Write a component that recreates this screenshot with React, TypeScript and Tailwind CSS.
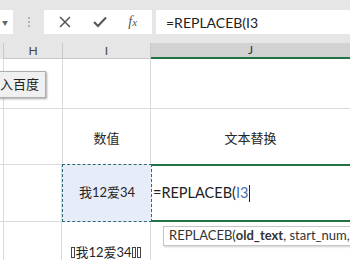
import React from "react";

const cjk = "font-['Lato','Noto_Sans_CJK_SC',sans-serif]";

function Tofu() {
  return <span className="inline-block w-[4px] h-[11px] border border-[#444] align-[-1px] mx-[0.5px]" />;
}

export default function App() {
  return (
    <div className={`relative w-[350px] h-[260px] overflow-hidden bg-white text-[#262626] ${cjk}`}>
      {/* Formula bar */}
      <div className="h-[44px] bg-[#e6e6e6] flex items-start pt-[10px]">
        <div className="w-[13px] h-[24px] bg-white flex items-center pl-[2px]">
          <span className="text-[6px] text-[#666]">▼</span>
        </div>
        <div className="w-[31px] h-[24px] flex items-center justify-center">
          <div className="flex flex-col gap-[2px]">
            <span className="w-[2px] h-[2px] bg-[#b4b4b4]" />
            <span className="w-[2px] h-[2px] bg-[#b4b4b4]" />
            <span className="w-[2px] h-[2px] bg-[#b4b4b4]" />
          </div>
        </div>
        <div className="w-[108px] h-[24px] bg-white flex items-center justify-around px-[4px] text-[#555]">
          <svg width="12" height="12" viewBox="0 0 12 12">
            <path d="M1 1 L11 11 M11 1 L1 11" stroke="#555" strokeWidth="1.5" fill="none" />
          </svg>
          <svg width="14" height="12" viewBox="0 0 14 12">
            <path d="M1 6 L5 10 L13 1.5" stroke="#555" strokeWidth="2" fill="none" />
          </svg>
          <span className="font-['Liberation_Serif',serif] italic text-[14px] leading-none">
            f<span className="text-[11px]">x</span>
          </span>
        </div>
        <div className="ml-[4px] flex-1 h-[24px] bg-white flex items-center pl-[10px] text-[14px] text-[#222]">
          =REPLACEB(I3
        </div>
      </div>

      {/* Column headers */}
      <div className="h-[16px] flex bg-[#e6e6e6] text-[12px] text-[#444] leading-none -mt-[1px]">
        <div className="w-[4px] border-r border-[#c8c8c8]" />
        <div className="w-[59px] border-r border-[#c8c8c8] border-b border-b-[#c8c8c8] flex items-center justify-center">H</div>
        <div className="w-[88px] border-r border-[#c8c8c8] border-b border-b-[#c8c8c8] flex items-center justify-center">I</div>
        <div className="flex-1 bg-[#d2d2d2] border-b-2 border-[#217346] flex items-center justify-center text-[#333]">J</div>
      </div>

      {/* Rows */}
      <div className="flex h-[50px] border-b border-[#dadada]">
        <div className="w-[4px] border-r border-[#dadada]" />
        <div className="w-[59px] border-r border-[#dadada]" />
        <div className="w-[88px] border-r border-[#dadada]" />
        <div className="flex-1" />
      </div>
      <div className="flex h-[56px] border-b border-[#dadada] text-[13px]">
        <div className="w-[4px] border-r border-[#dadada]" />
        <div className="w-[59px] border-r border-[#dadada]" />
        <div className="w-[88px] border-r border-[#dadada] flex items-center justify-center pt-[4px]">数值</div>
        <div className="flex-1 flex items-center justify-center pt-[4px]">文本替换</div>
      </div>
      <div className="flex h-[57px] border-b border-[#dadada]">
        <div className="w-[4px] border-r border-[#dadada]" />
        <div className="w-[58px] border-r border-[#dadada]" />
        <div className="w-[90px] -mt-[1px] -mb-[1px] bg-[#e7edf8] border border-dashed border-[#2e6a78] flex items-center justify-center text-[13px]">
          我12爱34
        </div>
        <div className="flex-1 -mt-[1px] -mb-[1px] border-y-2 border-[#217346] flex items-center pl-[1px] text-[14.5px] text-[#222] leading-none">
          =REPLACEB(<span className="text-[#4a6fb8]">I3</span>
          <span className="inline-block w-[1px] h-[17px] bg-[#222] ml-[1px]" />
        </div>
      </div>
      <div className="flex h-[40px]">
        <div className="w-[4px] border-r border-[#dadada]" />
        <div className="w-[58px] border-r border-[#dadada]" />
        <div className="w-[89px] border-r border-[#dadada] text-center text-[13px] pt-[21px]">
          <span>
            <Tofu />我12爱34<Tofu /><Tofu />
          </span>
        </div>
        <div className="flex-1" />
      </div>

      {/* Floating button */}
      <div className="absolute left-[-18px] top-[71px] w-[64px] h-[27px] bg-[#f0f0f0] border border-[#adadad] shadow-[1px_1px_2px_rgba(0,0,0,0.35)] flex items-center justify-end pr-[6px] text-[13px] text-[#222]">
        插入百度
      </div>

      {/* Tooltip */}
      <div className="absolute left-[163px] top-[226px] w-[200px] h-[20px] bg-white border border-[#c6c6c6] shadow-[1px_1px_2px_rgba(0,0,0,0.2)] flex items-center pl-[5px] text-[13px] text-[#333] whitespace-nowrap">
        REPLACEB(<b>old_text</b>, start_num, num_bytes, new_text)
      </div>
    </div>
  );
}
